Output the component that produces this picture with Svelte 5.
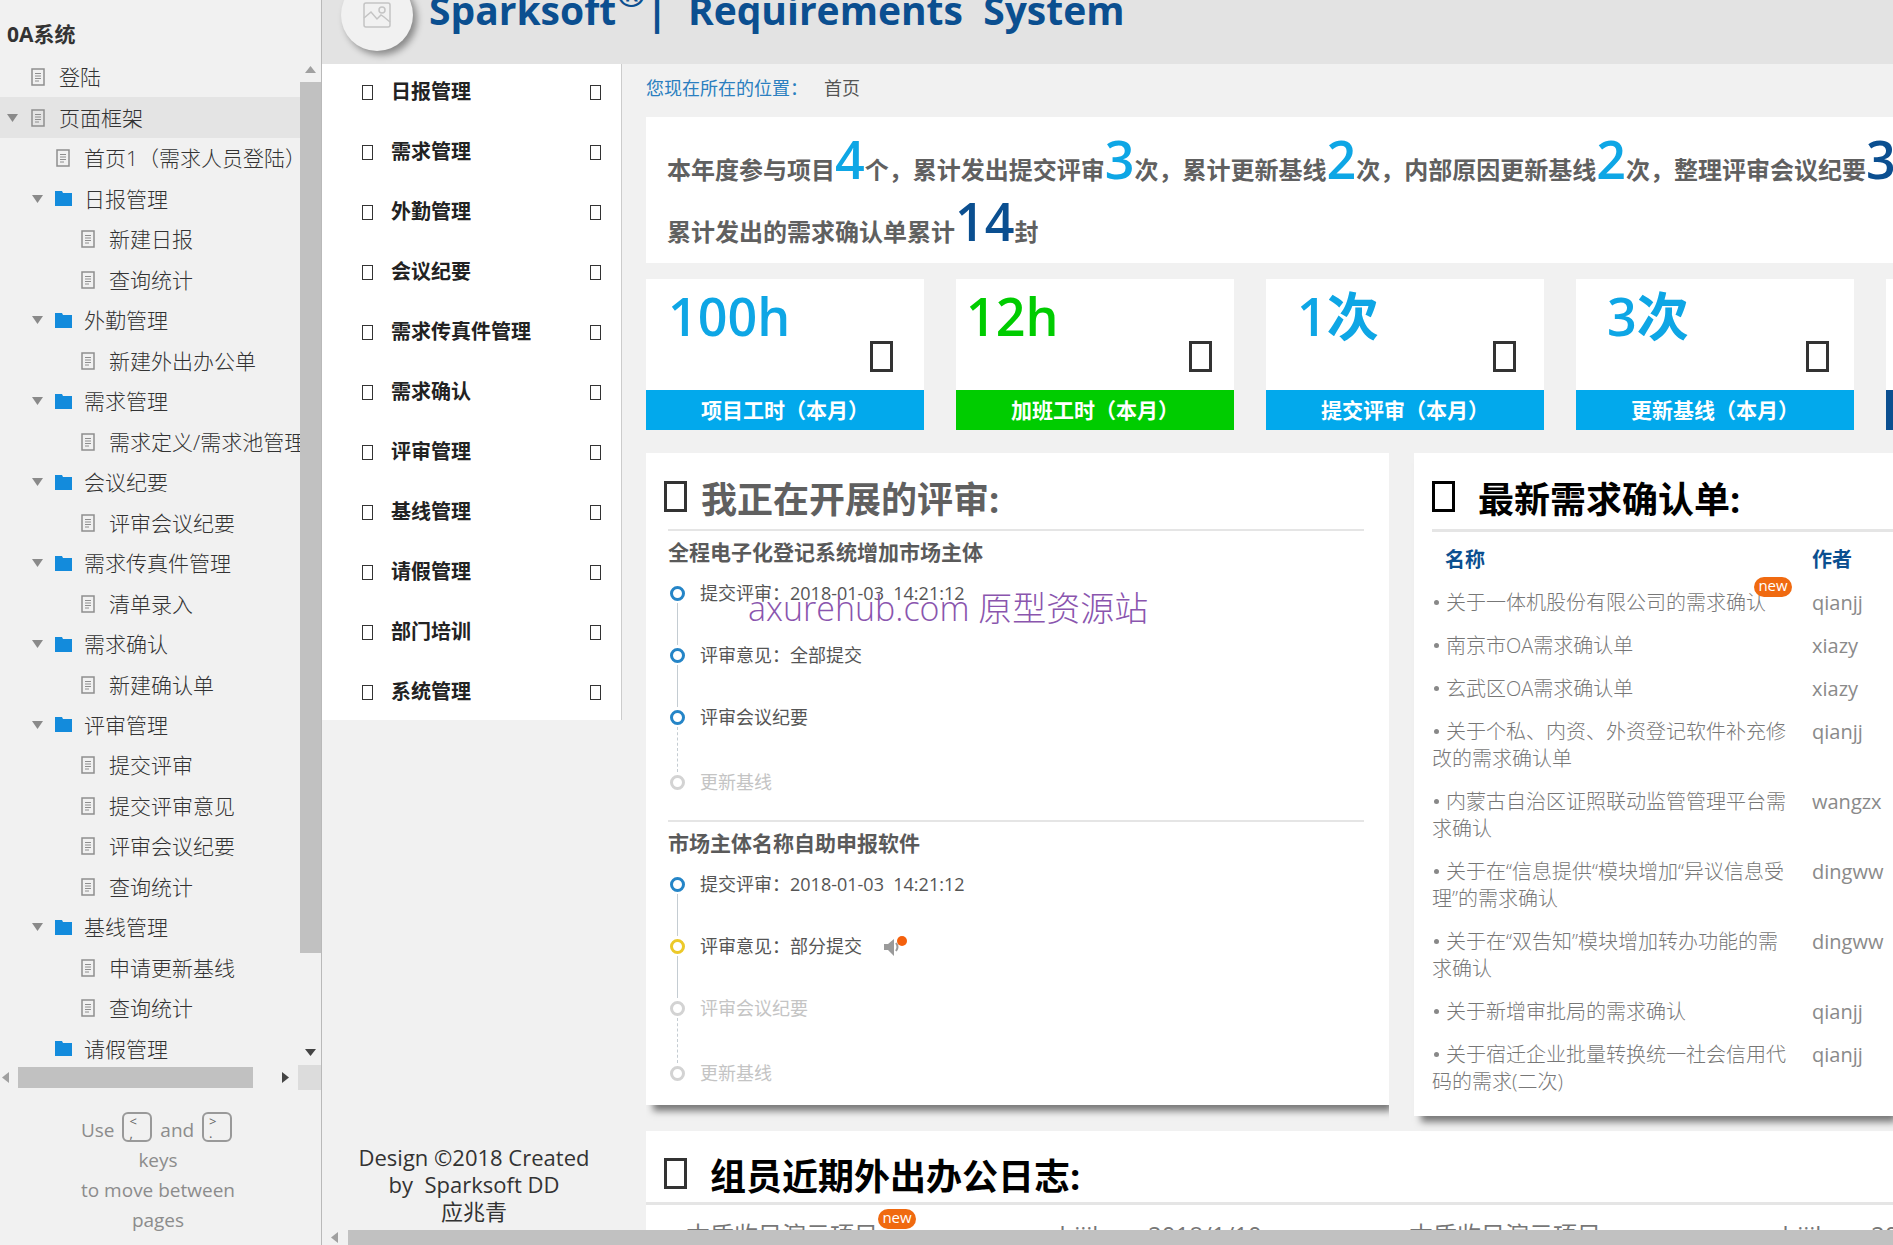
<script>
  const tree = [
    { level: 0, icon: 'page', label: '登陆' },
    { level: 0, icon: 'page', label: '页面框架', open: true, selected: true },
    { level: 1, icon: 'page', label: '首页1（需求人员登陆）' },
    { level: 1, icon: 'folder', label: '日报管理', open: true },
    { level: 2, icon: 'page', label: '新建日报' },
    { level: 2, icon: 'page', label: '查询统计' },
    { level: 1, icon: 'folder', label: '外勤管理', open: true },
    { level: 2, icon: 'page', label: '新建外出办公单' },
    { level: 1, icon: 'folder', label: '需求管理', open: true },
    { level: 2, icon: 'page', label: '需求定义/需求池管理' },
    { level: 1, icon: 'folder', label: '会议纪要', open: true },
    { level: 2, icon: 'page', label: '评审会议纪要' },
    { level: 1, icon: 'folder', label: '需求传真件管理', open: true },
    { level: 2, icon: 'page', label: '清单录入' },
    { level: 1, icon: 'folder', label: '需求确认', open: true },
    { level: 2, icon: 'page', label: '新建确认单' },
    { level: 1, icon: 'folder', label: '评审管理', open: true },
    { level: 2, icon: 'page', label: '提交评审' },
    { level: 2, icon: 'page', label: '提交评审意见' },
    { level: 2, icon: 'page', label: '评审会议纪要' },
    { level: 2, icon: 'page', label: '查询统计' },
    { level: 1, icon: 'folder', label: '基线管理', open: true },
    { level: 2, icon: 'page', label: '申请更新基线' },
    { level: 2, icon: 'page', label: '查询统计' },
    { level: 1, icon: 'folder', label: '请假管理' }
  ];

  const menu = [
    '日报管理', '需求管理', '外勤管理', '会议纪要', '需求传真件管理', '需求确认',
    '评审管理', '基线管理', '请假管理', '部门培训', '系统管理'
  ];

  const stats = [
    { value: '100h', label: '项目工时（本月）', tone: 'blue', left: 22, right: 31 },
    { value: '12h', label: '加班工时（本月）', tone: 'green', left: 10, right: 22 },
    { value: '1次', label: '提交评审（本月）', tone: 'blue', left: 31, right: 28 },
    { value: '3次', label: '更新基线（本月）', tone: 'blue', left: 31, right: 25 },
    { value: '', label: '', tone: 'navy', left: 31, right: 25 }
  ];

  const reviews = [
    {
      title: '全程电子化登记系统增加市场主体',
      steps: [
        { text: '提交评审：2018-01-03  14:21:12', state: 'done' },
        { text: '评审意见：全部提交', state: 'done' },
        { text: '评审会议纪要', state: 'done', dashed: true },
        { text: '更新基线', state: 'todo' }
      ]
    },
    {
      title: '市场主体名称自助申报软件',
      steps: [
        { text: '提交评审：2018-01-03  14:21:12', state: 'done' },
        { text: '评审意见：部分提交', state: 'partial', alert: true },
        { text: '评审会议纪要', state: 'todo', dashed: true },
        { text: '更新基线', state: 'todo' }
      ]
    }
  ];

  const confirmations = [
    { name: '关于一体机股份有限公司的需求确认', author: 'qianjj', fresh: true },
    { name: '南京市OA需求确认单', author: 'xiazy' },
    { name: '玄武区OA需求确认单', author: 'xiazy' },
    { name: '关于个私、内资、外资登记软件补充修改的需求确认单', author: 'qianjj' },
    { name: '内蒙古自治区证照联动监管管理平台需求确认', author: 'wangzx' },
    { name: '关于在“信息提供“模块增加“异议信息受理”的需求确认', author: 'dingww' },
    { name: '关于在“双告知”模块增加转办功能的需求确认', author: 'dingww' },
    { name: '关于新增审批局的需求确认', author: 'qianjj' },
    { name: '关于宿迁企业批量转换统一社会信用代码的需求(二次)', author: 'qianjj' }
  ];

  const logs = [
    { name: '本质收目演示项目', author: 'shijjh', date: '2018/1/10', fresh: true },
    { name: '本质收目演示项目', author: 'shijjh', date: '2018/1/10' }
  ];
</script>

<div class="app">
  <aside class="sidebar">
    <h2 class="project">0A系统</h2>
    <div class="tree-pane">
      <ul class="tree">
        {#each tree as node}
          <li class="node level-{node.level}" class:selected={node.selected}>
            <span class="caret">
              {#if node.open}
                <svg width="11" height="8" viewBox="0 0 11 8"><path d="M0 0h11L5.500 8z" fill="#8a8a8a" /></svg>
              {/if}
            </span>
            {#if node.icon === 'folder'}
              <svg class="icon" width="17" height="15" viewBox="0 0 17 15">
                <path d="M0 0h7l1 2h9v13H0z" fill="#138bdc" />
              </svg>
            {:else}
              <svg class="icon" width="17" height="18" viewBox="0 0 17 18" fill="none" stroke="#8e8e8e">
                <path d="M2 1h12v16H2z" stroke-width="1.500" />
                <path d="M5 5.500h6M5 8h6M5 10.500h6M5 13h4" />
              </svg>
            {/if}
            <a href="#page">{node.label}</a>
          </li>
        {/each}
      </ul>
      <div class="vscroll">
        <svg width="11" height="7" viewBox="0 0 11 7"><path d="M0 7L5.500 0 11 7z" fill="#a0a0a0" /></svg>
        <div class="vthumb"></div>
        <svg width="11" height="7" viewBox="0 0 11 7"><path d="M0 0h11L5.500 7z" fill="#444" /></svg>
      </div>
    </div>
    <div class="hscroll">
      <svg width="7" height="11" viewBox="0 0 7 11"><path d="M7 0v11L0 5.500z" fill="#a0a0a0" /></svg>
      <div class="htrack"><div class="hthumb"></div></div>
      <svg width="7" height="11" viewBox="0 0 7 11"><path d="M0 0v11l7-5.500z" fill="#444" /></svg>
      <div class="corner"></div>
    </div>
    <p class="help">
      Use <kbd><span>&lt;</span><span>,</span></kbd> and <kbd><span>&gt;</span><span>.</span></kbd><br />
      keys<br />
      to move between<br />
      pages
    </p>
  </aside>

  <div class="main">
    <header class="banner">
      <div class="logo">
        <svg width="28" height="26" viewBox="0 0 28 26" fill="none" stroke="#c4c4c4" stroke-width="1.500">
          <rect x="1" y="1" width="26" height="24" rx="2" />
          <path d="M1 16l7-6 6 7 4-4 3 2 6 5" />
          <circle cx="19" cy="8" r="3" />
        </svg>
      </div>
      <h1>Sparksoft<sup>®</sup>| &nbsp;Requirements &nbsp;System</h1>
    </header>

    <div class="body">
      <div class="side">
        <nav class="menu">
          {#each menu as item}
            <a href="#menu">
              <span class="box small"></span>
              <span class="menu-label">{item}</span>
              <span class="box small"></span>
            </a>
          {/each}
        </nav>
        <footer class="credit">
          Design ©2018 Created<br />
          by &nbsp;Sparksoft DD<br />
          应兆青
        </footer>
      </div>

      <main class="content">
        <div class="crumbs"><span>您现在所在的位置：</span><a href="#home">首页</a></div>

        <section class="summary">
          <p>
            本年度参与项目<b>4</b>个，累计发出提交评审<b>3</b>次，累计更新基线<b>2</b>次，内部原因更新基线<b>2</b>次，整理评审会议纪要<b class="navy">3</b>次，
          </p>
          <p>累计发出的需求确认单累计<b class="navy">14</b>封</p>
        </section>

        <section class="stats">
          {#each stats as stat}
            <div class="stat {stat.tone}">
              <div class="stat-top" style="padding-left: {stat.left}px; padding-right: {stat.right}px">
                <span class="stat-value">{stat.value}</span>
                <span class="box"></span>
              </div>
              <div class="stat-label">{stat.label}</div>
            </div>
          {/each}
        </section>

        <div class="columns">
          <section class="panel reviews">
            <div class="panel-head">
              <span class="box"></span>
              <h2>我正在开展的评审:</h2>
            </div>
            {#each reviews as review}
              <div class="review">
                <h3>{review.title}</h3>
                <ol>
                  {#each review.steps as step}
                    <li class={step.state} class:dashed={step.dashed}>
                      <span class="track"><i class="ring"></i><i class="line"></i></span>
                      <span class="step-text">{step.text}</span>
                      {#if step.alert}
                        <svg class="speaker" width="24" height="20" viewBox="0 0 24 20">
                          <path d="M0 8h4l6-5v17l-6-6H0z" fill="#9a9a9a" />
                          <path d="M12 7q3 4 0 8" fill="none" stroke="#9a9a9a" stroke-width="2" />
                          <circle cx="18" cy="5" r="5" fill="#f4600c" />
                        </svg>
                      {/if}
                    </li>
                  {/each}
                </ol>
              </div>
            {/each}
            <div class="watermark">axurehub.com 原型资源站</div>
          </section>

          <section class="panel latest">
            <div class="panel-head wide">
              <span class="box"></span>
              <h2>最新需求确认单:</h2>
            </div>
            <table>
              <thead>
                <tr><th class="name">名称</th><th>作者</th></tr>
              </thead>
              <tbody>
                {#each confirmations as row}
                  <tr>
                    <td class="name">
                      <span class="dot"></span>{row.name}
                      {#if row.fresh}<span class="badge">new</span>{/if}
                    </td>
                    <td>{row.author}</td>
                  </tr>
                {/each}
              </tbody>
            </table>
          </section>
        </div>

        <section class="panel logs">
          <div class="panel-head wide">
            <span class="box"></span>
            <h2>组员近期外出办公日志:</h2>
          </div>
          <div class="log-row">
            {#each logs as log}
              <span class="log-name">{log.name}{#if log.fresh}<span class="badge">new</span>{/if}</span>
              <span class="log-author">{log.author}</span>
              <span class="log-date">{log.date}</span>
            {/each}
          </div>
        </section>
      </main>
    </div>

    <div class="page-scroll">
      <svg width="7" height="11" viewBox="0 0 7 11"><path d="M7 0v11L0 5.500z" fill="#a0a0a0" /></svg>
      <div class="page-thumb"></div>
    </div>
  </div>
</div>

<style>
  :global(body) {
    background: #f1f1f1;
    font-family: 'Open Sans', 'Noto Sans CJK SC', sans-serif;
    color: #333;
  }

  h1, h2, h3, p, ul, ol {
    margin: 0;
    padding: 0;
    list-style: none;
  }

  a {
    color: inherit;
    text-decoration: none;
  }

  .app {
    display: flex;
    height: 100vh;
    overflow: hidden;
  }

  .box {
    flex: none;
    box-sizing: border-box;
    width: 23px;
    height: 31px;
    border: 3px solid #333;
  }

  .box.small {
    width: 11px;
    height: 15px;
    border-width: 1px;
  }

  /* page tree */
  .sidebar {
    display: flex;
    flex-direction: column;
    flex: none;
    width: 321px;
    border-right: 1px solid #b9b9b9;
  }

  .project {
    padding: 20px 7px 9px;
    font-size: 21px;
    line-height: 28px;
  }

  .tree-pane {
    display: flex;
    flex: 1;
    min-height: 0;
    overflow: hidden;
  }

  .tree {
    display: flex;
    flex-direction: column;
    flex: 1;
    min-width: 0;
    margin-bottom: -4px;
    overflow: hidden;
  }

  .node {
    display: flex;
    flex: 1;
    align-items: center;
    font-size: 21px;
    font-weight: 300;
    line-height: 28px;
    color: #333;
    white-space: nowrap;
  }

  .node.selected {
    background: #e4e4e4;
  }

  .level-0 {
    padding-left: 7px;
  }

  .level-1 {
    padding-left: 32px;
  }

  .level-2 {
    padding-left: 57px;
  }

  .caret {
    display: flex;
    flex: none;
    width: 23px;
  }

  .icon {
    flex: none;
    margin-right: 12px;
  }

  .vscroll {
    display: flex;
    flex-direction: column;
    align-items: center;
    justify-content: space-between;
    width: 21px;
    padding: 9px 0;
  }

  .vthumb {
    width: 21px;
    flex: 1;
    margin: 9px 0 96px;
    background: #c1c1c1;
  }

  .hscroll {
    display: flex;
    align-items: center;
    height: 25px;
    padding-left: 2px;
  }

  .htrack {
    flex: 1;
    padding: 0 9px;
  }

  .hthumb {
    width: 92%;
    height: 21px;
    background: #c1c1c1;
  }

  .corner {
    width: 23px;
    height: 25px;
    margin-left: 9px;
    background: #dcdcdc;
  }

  .help {
    padding: 22px 5px 10px 0;
    font-size: 19px;
    line-height: 30px;
    text-align: center;
    color: #8c8c8c;
  }

  kbd {
    display: inline-flex;
    flex-direction: column;
    box-sizing: border-box;
    width: 30px;
    height: 30px;
    margin: 0 3px;
    padding: 1px 5px;
    border: 2px solid #999;
    border-radius: 6px;
    font-family: inherit;
    font-size: 13px;
    line-height: 12px;
    text-align: left;
    color: #666;
    vertical-align: 11px;
  }

  /* header */
  .main {
    position: relative;
    display: flex;
    flex: 1;
    flex-direction: column;
    min-width: 0;
  }

  .banner {
    display: flex;
    align-items: flex-start;
    gap: 16px;
    height: 64px;
    padding-left: 19px;
    background: #e3e3e3;
  }

  .logo {
    display: flex;
    align-items: center;
    justify-content: center;
    width: 72px;
    height: 72px;
    margin-top: -21px;
    border-radius: 50%;
    background: #f1f1f1;
    box-shadow: 4px 4px 7px rgba(0, 0, 0, 0.4);
  }

  h1 {
    margin-top: -6px;
    font-size: 39px;
    font-weight: 700;
    line-height: 8px;
    color: #0b4f90;
    white-space: nowrap;
  }

  h1 sup {
    font-size: 36px;
    font-weight: 600;
    line-height: 0;
    vertical-align: 18px;
  }

  .body {
    display: flex;
    flex: 1;
    min-height: 0;
  }

  .side {
    display: flex;
    flex-direction: column;
    justify-content: space-between;
    flex: none;
    width: 300px;
  }

  .menu {
    display: flex;
    flex-direction: column;
    gap: 4px;
    border-right: 1px solid #ccc;
    background: #fff;
  }

  .menu a {
    display: flex;
    align-items: center;
    padding: 0 20px 0 40px;
    font-size: 20px;
    font-weight: 700;
    line-height: 56px;
    color: #222;
  }

  .menu-label {
    flex: 1;
    padding-left: 18px;
  }

  .credit {
    padding: 0 0 20px 4px;
    font-size: 22px;
    line-height: 27px;
    text-align: center;
  }

  .content {
    flex: 1;
    min-width: 0;
    padding-left: 24px;
    overflow: hidden;
  }

  .crumbs {
    display: flex;
    gap: 16px;
    padding: 12px 0 17px;
    font-size: 18px;
    line-height: 24px;
    color: #555;
  }

  .crumbs span {
    color: #2a7fc0;
  }

  .summary {
    padding: 22px 0 0 21px;
    background: #fff;
    font-size: 24px;
    font-weight: 700;
    line-height: 62px;
    color: #606060;
    white-space: nowrap;
  }

  .summary b {
    font-size: 52px;
    font-weight: 600;
    line-height: 0;
    color: #0ea6e5;
  }

  .summary b.navy {
    color: #0b4f90;
  }

  .stats {
    display: flex;
    gap: 32px;
    margin: 16px 0 23px;
  }

  .stat {
    flex: none;
    width: 278px;
    background: #fff;
  }

  .stat-top {
    display: flex;
    justify-content: space-between;
    height: 111px;
  }

  .stat-top .box {
    align-self: flex-end;
    margin-bottom: 18px;
  }

  .stat-value {
    font-size: 52px;
    font-weight: 600;
    line-height: 74px;
    color: #0ea6e5;
  }

  .green .stat-value {
    color: #0c0;
  }

  .stat-label {
    height: 40px;
    background: #02a9ec;
    font-size: 21px;
    font-weight: 700;
    line-height: 40px;
    text-align: center;
    color: #fff;
  }

  .green .stat-label {
    background: #0c0;
  }

  .navy .stat-label {
    background: #0b4f90;
  }

  .columns {
    display: grid;
    grid-template-columns: 743fr 479fr;
    align-items: start;
    gap: 25px;
    margin-bottom: 15px;
  }

  .panel {
    min-width: 0;
    background: #fff;
  }

  .panel-head {
    display: flex;
    align-items: center;
    gap: 14px;
    padding-top: 18px;
  }

  .panel-head.wide {
    gap: 23px;
  }

  .panel-head .box {
    margin-bottom: 7px;
  }

  .panel-head h2 {
    font-size: 36px;
    font-weight: 700;
    line-height: 58px;
    white-space: nowrap;
  }

  .reviews {
    position: relative;
    padding: 0 25px 0 22px;
    box-shadow: 5px 8px 7px -2px rgba(0, 0, 0, 0.5);
    clip-path: inset(0 0 -20px 0);
  }

  .reviews .panel-head {
    margin-left: -4px;
    color: #606060;
  }

  .review {
    padding-bottom: 28px;
    border-top: 2px solid #e5e5e5;
  }

  .review:nth-of-type(3) {
    padding-bottom: 22px;
  }

  h3 {
    padding: 7px 0 17px;
    font-size: 21px;
    font-weight: 700;
    line-height: 28px;
    color: #5a5a5a;
  }

  .review li {
    display: flex;
    height: 62px;
    font-size: 18px;
    line-height: 20px;
    color: #555;
    white-space: pre;
  }

  .review li.dashed {
    height: 65px;
  }

  .review li:last-child {
    height: 20px;
  }

  .review li.todo {
    color: #c4c4c4;
  }

  .track {
    display: flex;
    flex-direction: column;
    align-items: center;
    gap: 2px;
    width: 19px;
    margin-right: 13px;
    padding-top: 3px;
  }

  .ring {
    box-sizing: border-box;
    flex: none;
    width: 15px;
    height: 15px;
    border: 3px solid #2585c7;
    border-radius: 50%;
  }

  .partial .ring {
    border-color: #ecc92a;
  }

  .todo .ring {
    border-color: #d3d3d3;
  }

  .line {
    flex: 1;
    border-left: 1px solid #c4ccd2;
  }

  .dashed .line {
    border-left-style: dashed;
  }

  li:last-child .line {
    display: none;
  }

  .speaker {
    margin-left: 22px;
  }

  .watermark {
    position: absolute;
    top: 134px;
    left: 102px;
    font-size: 34px;
    font-weight: 300;
    line-height: 42px;
    color: #8a55ae;
    white-space: nowrap;
  }

  .latest {
    padding: 0 0 5px 18px;
    color: #000;
    box-shadow: 5px 8px 7px -2px rgba(0, 0, 0, 0.5);
  }

  .latest .box {
    border-color: #000;
  }

  table {
    width: 100%;
    border-collapse: collapse;
    border-top: 3px solid #e5e5e5;
    table-layout: fixed;
  }

  th, td {
    padding: 0 0 16px;
    font-size: 20px;
    line-height: 27px;
    text-align: left;
    vertical-align: top;
  }

  th {
    padding-top: 14px;
    font-weight: 700;
    color: #0b4f90;
  }

  td {
    color: #8a8a8a;
  }

  .name {
    width: 365px;
    padding-right: 15px;
  }

  th.name {
    padding-left: 13px;
    width: 352px;
  }

  td.name {
    position: relative;
    font-weight: 300;
    color: #777;
  }

  .dot {
    display: inline-block;
    width: 5px;
    height: 5px;
    margin: 0 7px 0 2px;
    border-radius: 50%;
    background: #888;
    vertical-align: 5px;
  }

  .badge {
    position: absolute;
    top: -12px;
    right: 20px;
    width: 38px;
    height: 20px;
    border-radius: 10px;
    background: #f06a10;
    font-size: 15px;
    font-weight: 400;
    line-height: 17px;
    text-align: center;
    color: #fff;
  }

  .logs {
    color: #000;
  }

  .logs .panel-head {
    padding: 20px 0 0 18px;
  }

  .logs .panel-head h2 {
    line-height: 51px;
  }

  .log-row {
    display: grid;
    grid-template-columns: 362px 100px 261px 362px 100px 261px;
    padding: 16px 0 0 40px;
    border-top: 3px solid #e5e5e5;
    font-size: 24px;
    line-height: 28px;
    color: #777;
  }

  .log-name {
    position: relative;
  }

  .log-name .badge {
    top: -12px;
    right: 132px;
  }

  .page-scroll {
    position: absolute;
    right: 0;
    bottom: 0;
    left: 0;
    display: flex;
    align-items: center;
    gap: 10px;
    padding-left: 9px;
    background: #f1f1f1;
  }

  .page-thumb {
    flex: 1;
    height: 15px;
    background: #c1c1c1;
  }
</style>
